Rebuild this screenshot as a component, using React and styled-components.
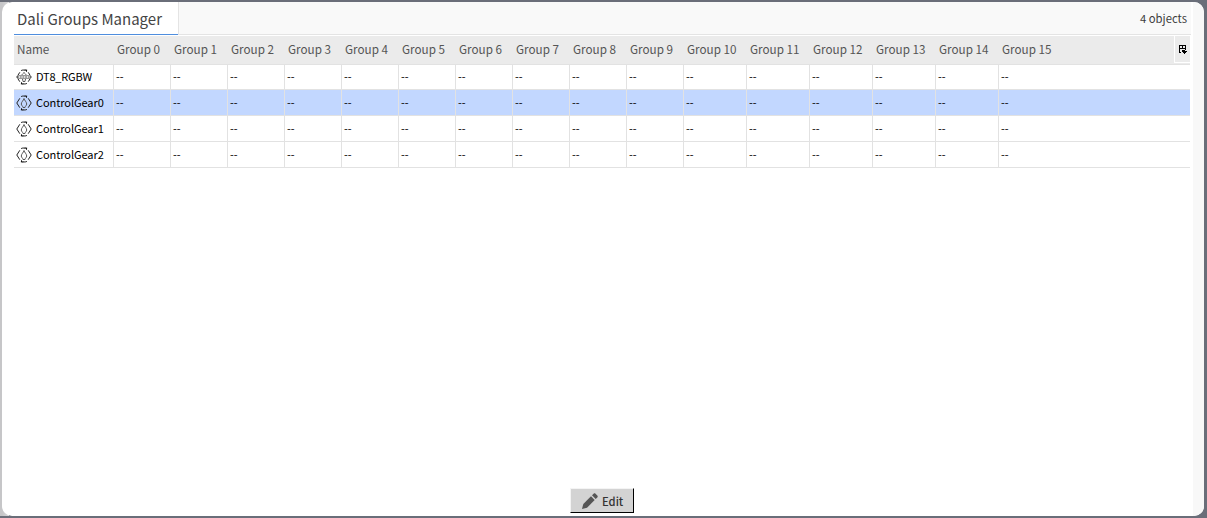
import React, { useState } from 'react'
import styled, { createGlobalStyle } from 'styled-components'

const GlobalStyle = createGlobalStyle`
  body {
    margin: 0;
    background: #6a6e79;
    overflow: hidden;
    font-family: "Noto Sans CJK SC", "Noto Sans", sans-serif;
    color: #000;
  }
  * {
    box-sizing: border-box;
  }
`

const Frame = styled.div`
  height: 518px;
  padding: 0 3px 0 2px;
  border-top: 2px solid #6a6e79;
  border-bottom: 2px solid #6a6e79;
  background: linear-gradient(to right, #c6c6c8 2px, #d8d8d9 9px, #6a6e79 9px);
`

const Panel = styled.div`
  height: 514px;
  display: flex;
  border-radius: 10px;
  overflow: hidden;
  background: #fff;
`

const Content = styled.div`
  flex: 1;
  display: flex;
  flex-direction: column;
  padding-left: 12px;
`

const SideStrip = styled.div`
  width: 11px;
  background: #f8f8f8;
`

const TitleBar = styled.div`
  height: 33px;
  display: flex;
  margin-right: 2px;
  background: #f9f9f9;
  border-bottom: 1px solid #e4e4e4;
`

const Tab = styled.div`
  width: 165px;
  height: 33px;
  padding-left: 3px;
  background: linear-gradient(#4f8ede, #4f8ede) 0 100% / 164px 1px no-repeat #fff;
  border-right: 1px solid #e4e4e4;
  font-size: 15px;
  line-height: 34px;
  color: #444;
  white-space: nowrap;
`

const ObjectCount = styled.div`
  margin-left: auto;
  padding-right: 4px;
  font-size: 11.3px;
  line-height: 33px;
  color: #3c3c3c;
`

const Table = styled.div`
  margin: 1px 3px 0 0;
`

const columns = '99px repeat(10, 57px) repeat(5, 63px) 1fr'

const HeadRow = styled.div`
  height: 29px;
  display: grid;
  grid-template-columns: ${columns} 16px;
  background: #ebebeb;
  border-bottom: 1px solid #e2e2e2;
`

const HeadCell = styled.div`
  padding-left: ${props => (props.$first ? 3 : 4)}px;
  font-size: 11.7px;
  line-height: 26px;
  color: #555;
  white-space: nowrap;
`

const MenuButton = styled.div`
  height: 27px;
  border-left: 1px solid #fff;
  border-bottom: 1px solid #fff;
  display: flex;
  padding: 9px 0 0 4px;
`

const NameCell = styled.div`
  height: 25px;
  display: flex;
  align-items: center;
  padding-left: 2px;
  gap: 4px;
`

const ObjectName = styled.span`
  padding-bottom: 2px;
  font-size: 11px;
  letter-spacing: ${props => (props.$tight ? -0.2 : -0.07)}px;
  line-height: 22px;
  white-space: nowrap;
`

const Cell = styled.div`
  border-left: 1px solid #e2e2e2;
  padding-left: 2px;
  font-size: 11px;
  line-height: 25px;
`

const Row = styled.div`
  height: 26px;
  display: grid;
  grid-template-columns: ${columns};
  background: ${props => (props.$selected ? '#c2d7ff' : '#fff')};
  border-bottom: 1px solid #e2e2e2;

  &:nth-child(2) {
    height: 25px;
    ${NameCell} {
      height: 24px;
    }
    ${Cell} {
      line-height: 23px;
    }
  }
`

const Footer = styled.div`
  margin-top: auto;
  display: flex;
  justify-content: center;
  padding: 0 3px 3px 0;
`

const EditButton = styled.button`
  width: 64px;
  height: 25px;
  display: flex;
  align-items: center;
  padding: 0 0 0 11px;
  gap: 4px;
  background: #d3d3d3;
  border: 1px solid #000;
  border-top-color: #f4f4f4;
  border-left-color: #f4f4f4;
  font-family: inherit;
  font-size: 11.2px;
  font-weight: 500;
  line-height: 22px;
  color: #333;
`

const GearIcon = ({ rgbw }) => (
  <svg width="16" height="16" viewBox="0 0 16 16" fill="none" stroke="#222" strokeWidth="1">
    <path d="M3.8 3.300L.8 8l3 4.700M12.200 3.300l3 4.700-3 4.700" />
    <path d="M5 1.700C6 1 7.500 .8 9 1.300M11 14.300c-1 .7-2.500.9-4 .4" />
    <path d="M8.300 .3l2.900 .5-.4 2.500zM7.700 15.700l-2.900-.5.400-2.500z" fill="#111" stroke="none" />
    {rgbw ? (
      <>
        <path d="M1 6.500h14M1 9.500h14" stroke="#999" />
        <path d="M6 6c0-1 1.500-1.500 2-2.500C8.500 4.500 10 5 10 6M6.500 10c0 1 .5 1.200.5 2.500h2c0-1.300.5-1.500.5-2.500" stroke="#555" />
        <path d="M1 8h14" stroke="#444" strokeDasharray="2 .7" />
      </>
    ) : (
      <path d="M8 3.500C7.500 5.500 5.300 7 5.300 9c0 1.500 1.500 2 1.700 3.500h2C9.200 11 10.700 10.500 10.700 9c0-2-2.200-3.500-2.700-5.500z" stroke="#555" />
    )}
  </svg>
)

const ColumnsIcon = () => (
  <svg width="9" height="9" viewBox="0 0 9 9" fill="none" stroke="#000" shapeRendering="crispEdges">
    <path d="M2 7.500H.5V.5h6v4M0 3.500h7M3.500 1v3" />
    <path d="M3 5h3v1h2v1H7v1H6v1H5V8H4V7H3z" fill="#000" stroke="none" />
  </svg>
)

const PencilIcon = () => (
  <svg width="16" height="16" viewBox="0 0 16 16" fill="#555">
    <path d="M0 16l1.300-5L9 3.300 12.700 7 5 14.700z" />
    <path d="M10 2.300L11.600.7c.6-.6 1.300-.6 1.900 0l1.800 1.800c.6.600.6 1.300 0 1.900L13.700 6z" />
  </svg>
)

const groups = Array.from({ length: 16 }, (_, i) => `Group ${i}`)

const objects = [
  { name: 'DT8_RGBW', rgbw: true },
  { name: 'ControlGear0' },
  { name: 'ControlGear1' },
  { name: 'ControlGear2' },
]

const App = () => {
  const [selected, setSelected] = useState('ControlGear0')

  return (
    <>
      <GlobalStyle />
      <Frame>
        <Panel>
          <Content>
            <TitleBar>
              <Tab>Dali Groups Manager</Tab>
              <ObjectCount>{objects.length} objects</ObjectCount>
            </TitleBar>
            <Table>
              <HeadRow>
                <HeadCell $first>Name</HeadCell>
                {groups.map(group => (
                  <HeadCell key={group}>{group}</HeadCell>
                ))}
                <MenuButton><ColumnsIcon /></MenuButton>
              </HeadRow>
              {objects.map(object => (
                <Row
                  key={object.name}
                  $selected={object.name === selected}
                  onClick={() => setSelected(object.name)}
                >
                  <NameCell>
                    <GearIcon rgbw={object.rgbw} />
                    <ObjectName $tight={object.rgbw}>{object.name}</ObjectName>
                  </NameCell>
                  {groups.map(group => (
                    <Cell key={group}>--</Cell>
                  ))}
                </Row>
              ))}
            </Table>
            <Footer>
              <EditButton>
                <PencilIcon />
                Edit
              </EditButton>
            </Footer>
          </Content>
          <SideStrip />
        </Panel>
      </Frame>
    </>
  )
}

export default App
